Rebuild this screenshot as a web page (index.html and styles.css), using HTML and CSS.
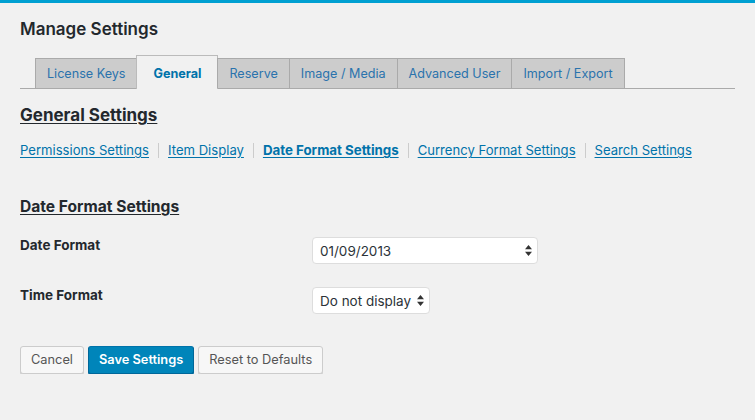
FILE: index.html
```html
<!DOCTYPE html>
<html lang="en">
<head>
    <meta charset="UTF-8">
    <meta name="viewport" content="width=device-width, initial-scale=1.0">
    <title>Manage Settings</title>
    <link rel="stylesheet" href="styles.css">
</head>
<body>
    <div class="topbar"></div>
    <div class="wrap">
        <h1 class="page-title">Manage Settings</h1>

        <nav class="nav-tabs">
            <a href="#" class="nav-tab">License Keys</a>
            <a href="#" class="nav-tab nav-tab-active">General</a>
            <a href="#" class="nav-tab">Reserve</a>
            <a href="#" class="nav-tab">Image / Media</a>
            <a href="#" class="nav-tab">Advanced User</a>
            <a href="#" class="nav-tab">Import / Export</a>
        </nav>

        <h2 class="section-title">General Settings</h2>

        <ul class="sublinks">
            <li><a href="#">Permissions Settings</a></li>
            <li><a href="#">Item Display</a></li>
            <li><a href="#" class="current">Date Format Settings</a></li>
            <li><a href="#">Currency Format Settings</a></li>
            <li><a href="#">Search Settings</a></li>
        </ul>

        <h3 class="group-title">Date Format Settings</h3>

        <form class="form-table">
            <div class="form-row">
                <label class="form-label" for="date_format">Date Format</label>
                <div class="select-wrap select-wide">
                    <select id="date_format">
                        <option>01/09/2013</option>
                        <option>09/01/2013</option>
                        <option>2013-01-09</option>
                    </select>
                    <svg class="select-arrow" width="7" height="11" viewBox="0 0 7 11"><path d="M3.5 0 L7 4.3 L0 4.3 Z M0 6.7 L7 6.7 L3.5 11 Z" fill="#333"/></svg>
                </div>
            </div>
            <div class="form-row">
                <label class="form-label" for="time_format">Time Format</label>
                <div class="select-wrap select-narrow">
                    <select id="time_format">
                        <option>Do not display</option>
                        <option>12 hour</option>
                        <option>24 hour</option>
                    </select>
                    <svg class="select-arrow" width="7" height="11" viewBox="0 0 7 11"><path d="M3.5 0 L7 4.3 L0 4.3 Z M0 6.7 L7 6.7 L3.5 11 Z" fill="#333"/></svg>
                </div>
            </div>

            <div class="actions">
                <button type="button" class="button">Cancel</button>
                <button type="button" class="button button-primary">Save Settings</button>
                <button type="button" class="button">Reset to Defaults</button>
            </div>
        </form>
    </div>
</body>
</html>
```

FILE: styles.css
```css
body {
    margin: 0;
    padding: 0;
    background-color: #f1f1f1;
    color: #23282d;
    font-family: Inter, "Liberation Sans", Arial, sans-serif;
    font-size: 13px;
}
.topbar {
    height: 3px;
    background-color: #00a0d2;
}
.wrap {
    padding: 0 20px;
}
.page-title {
    margin: 14px 0 0;
    font-size: 17px;
    line-height: 24px;
    font-weight: 600;
}

/* tabs */
.nav-tabs {
    display: flex;
    align-items: flex-end;
    margin-top: 14px;
    padding-left: 15px;
    border-bottom: 1px solid #aaa;
}
.nav-tab {
    display: block;
    height: 29px;
    line-height: 29px;
    padding: 0 11px;
    background-color: #ccc;
    border: 1px solid #aaa;
    border-bottom: none;
    color: #2a73ad;
    font-size: 12.6px;
    text-decoration: none;
}
.nav-tab + .nav-tab {
    margin-left: -1px;
}
.nav-tab-active {
    box-sizing: border-box;
    height: 34px;
    padding: 3px 16px 0;
    margin-bottom: -1px;
    background-color: #f1f1f1;
    border-color: #bbb;
    color: #0073aa;
    font-weight: 700;
}

.section-title {
    margin: 14px 0 0;
    font-size: 17px;
    line-height: 24px;
    font-weight: 700;
    text-decoration: underline;
    text-underline-offset: 2px;
}
.sublinks {
    display: flex;
    margin: 13px 0 0;
    padding: 0;
    list-style: none;
    line-height: 20px;
}
.sublinks li {
    display: flex;
    align-items: center;
}
.sublinks li + li::before {
    content: "";
    width: 1px;
    height: 15px;
    margin: 0 9px;
    background-color: #ccc;
}
.sublinks a {
    color: #0073aa;
    font-size: 13.1px;
    text-underline-offset: 2px;
}
.sublinks a.current {
    font-weight: 700;
    font-size: 13.3px;
}
.group-title {
    margin: 37px 0 0;
    font-size: 15.6px;
    line-height: 20px;
    font-weight: 700;
    text-decoration: underline;
    text-underline-offset: 2px;
}

/* form */
.form-table {
    margin-top: 20px;
}
.form-row {
    display: grid;
    grid-template-columns: 292px 1fr;
    align-items: start;
    margin-bottom: 23px;
}
.form-label {
    font-size: 13.5px;
    font-weight: 700;
    line-height: 16px;
}
.select-wrap {
    position: relative;
}
.select-wide {
    width: 226px;
}
.select-narrow {
    width: 118px;
}
.select-wrap select {
    appearance: none;
    -webkit-appearance: none;
    display: block;
    width: 100%;
    height: 27px;
    padding: 0 14px 0 7px;
    background-color: #fff;
    border: 1px solid #ddd;
    border-radius: 4px;
    color: #2c3338;
    font-family: inherit;
    font-size: 13.5px;
    outline: none;
}
.select-arrow {
    position: absolute;
    right: 6px;
    top: 8px;
    pointer-events: none;
}

.actions {
    display: flex;
    gap: 4px;
    margin-top: 32px;
}
.button {
    height: 28px;
    padding: 0 10px;
    background-color: #f7f7f7;
    border: 1px solid #ccc;
    border-radius: 3px;
    box-shadow: 0 1px 0 #ccc;
    color: #555;
    font-family: inherit;
    font-size: 12.8px;
    line-height: 26px;
    cursor: pointer;
}
.button-primary {
    background-color: #0085ba;
    border-color: #0073aa #006799 #006799;
    box-shadow: 0 1px 0 #006799;
    color: #fff;
    font-weight: 600;
}
```
